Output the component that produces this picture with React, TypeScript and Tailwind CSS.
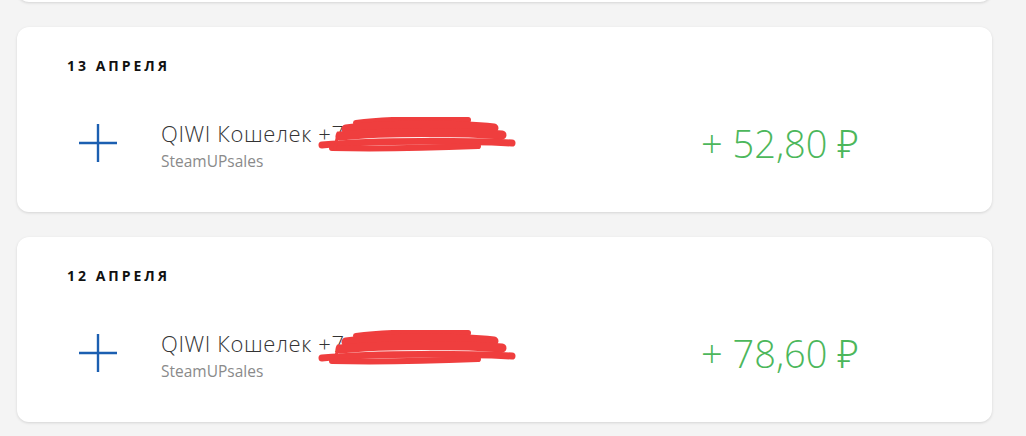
import React from "react";

const font = { fontFamily: '"Open Sans", "Noto Sans", sans-serif' };

function Plus() {
  return (
    <svg width="38" height="38" viewBox="0 0 38 38">
      <line x1="19" y1="0" x2="19" y2="38" stroke="#1b5fb1" strokeWidth="2.4" />
      <line x1="0" y1="19" x2="38" y2="19" stroke="#1b5fb1" strokeWidth="2.4" />
    </svg>
  );
}

function Scribble({ variant }: { variant: number }) {
  const c = "#ef3e3e";
  return (
    <svg width="200" height="40" viewBox="0 0 200 40" className="absolute" style={{ left: 157, top: variant === 0 ? 1 : 4 }}>
      <g stroke={c} fill="none" strokeLinecap="round" strokeLinejoin="round">
        <path d="M 38 6 C 70 2, 120 1, 150 3" strokeWidth="6" />
        <path d="M 28 12 C 60 7, 140 7, 176 11" strokeWidth="9" />
        <path d="M 22 19 C 70 14, 150 15, 184 18" strokeWidth="9" />
        <path d="M 4 28 C 60 23, 150 24, 194 26" strokeWidth="7" />
        <path d="M 14 31 C 60 32, 110 31, 160 29" strokeWidth="6" />
        <path d="M 20 16 L 17 32" strokeWidth="3" />
      </g>
    </svg>
  );
}

function Card({ date, amount, variant }: { date: string; amount: string; variant: number }) {
  return (
    <div className="h-[185px] rounded-[12px] bg-white shadow-[0_1px_3px_rgba(0,0,0,0.13)] pt-[31px] pl-[50px]" style={font}>
      <div className="h-[16px] text-[14px] leading-[16px] font-bold tracking-[3px] text-[#111]">{date}</div>
      <div className="mt-[39px] h-[60px] flex items-center">
        <div className="ml-[12px] w-[38px] h-[38px]">
          <Plus />
        </div>
        <div className="ml-[44px] w-[540px] relative pt-[3px]">
          <div className="text-[22px] leading-[28px] text-[#333] font-light tracking-[0.6px] whitespace-nowrap">QIWI Кошелек +7</div>
          <div className="mt-[4px] text-[15.5px] leading-[20px] text-[#8a8a8a]">SteamUPsales</div>
          <Scribble variant={variant} />
        </div>
        <div className="text-[38px] leading-[46px] text-[#4cb75b] font-light whitespace-nowrap">{amount}</div>
      </div>
    </div>
  );
}

export default function App() {
  return (
    <div className="w-[1026px] h-[436px] bg-[#f4f4f4] overflow-hidden">
      <div className="pl-[17px] w-[992px] flex flex-col gap-[25px] mt-[-183px]">
        <div className="h-[185px] rounded-[12px] bg-white shadow-[0_1px_3px_rgba(0,0,0,0.13)]" />
        <Card date="13 АПРЕЛЯ" amount="+ 52,80 ₽" variant={0} />
        <Card date="12 АПРЕЛЯ" amount="+ 78,60 ₽" variant={1} />
      </div>
    </div>
  );
}
